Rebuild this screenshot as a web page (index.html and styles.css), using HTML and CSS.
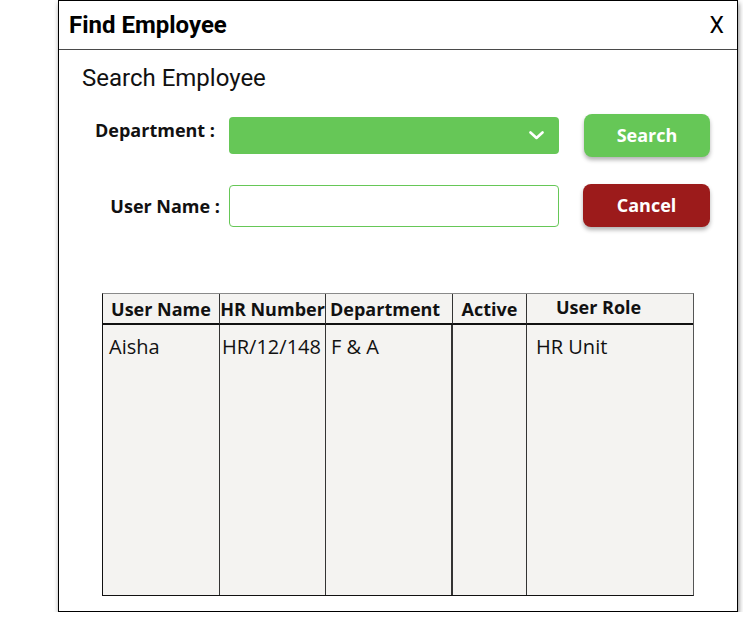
FILE: index.html
```html
<!DOCTYPE html>
<html lang="en">
<head>
<meta charset="utf-8">
<title>Find Employee</title>
<link rel="stylesheet" href="styles.css">
</head>
<body>
<div class="dialog">
  <div class="dialog-header">
    <h1 class="dialog-title">Find Employee</h1>
    <span class="dialog-close">X</span>
  </div>
  <h2 class="section-title">Search Employee</h2>
  <div class="form-row">
    <label class="form-label form-label-raised">Department :</label>
    <div class="select">
      <svg class="chevron" width="15" height="9" viewBox="0 0 15 9"><path d="M1.5 1.5 L7.5 7 L13.5 1.5" fill="none" stroke="#fff" stroke-width="2.6" stroke-linecap="round" stroke-linejoin="round"/></svg>
    </div>
    <button class="btn btn-search">Search</button>
  </div>
  <div class="form-row form-row-second">
    <label class="form-label form-label-wide">User Name :</label>
    <div class="text-input"></div>
    <button class="btn btn-cancel">Cancel</button>
  </div>
  <div class="table">
    <div class="th">User Name</div>
    <div class="th">HR Number</div>
    <div class="th th-dept">Department</div>
    <div class="th">Active</div>
    <div class="th th-role">User Role</div>
    <div class="td td-user">Aisha</div>
    <div class="td td-hr">HR/12/148</div>
    <div class="td td-dept">F &amp; A</div>
    <div class="td td-active"></div>
    <div class="td td-role">HR Unit</div>
  </div>
</div>
</body>
</html>
```
FILE: styles.css
```css
html, body {
  margin: 0;
  padding: 0;
  background: #fff;
}

.dialog {
  box-sizing: border-box;
  margin-left: 58px;
  width: 680px;
  height: 612px;
  border: 1px solid #000;
  background: #fff;
  box-shadow: 1px 3px 5px rgba(0, 0, 0, 0.45);
  display: flex;
  flex-direction: column;
}

.dialog-header {
  height: 48px;
  border-bottom: 1px solid #4a4a4a;
  display: flex;
  align-items: center;
  justify-content: space-between;
  padding: 0 13px 0 10px;
}

.dialog-title {
  margin: 0;
  font-family: Roboto, "Liberation Sans", sans-serif;
  font-weight: 700;
  font-size: 24px;
  color: #000;
}

.dialog-close {
  font-family: Roboto, "Liberation Sans", sans-serif;
  font-weight: 400;
  font-size: 23px;
  color: #000;
}

.section-title {
  margin: 15px 0 0 23px;
  font-family: Roboto, "Liberation Sans", sans-serif;
  font-weight: 400;
  font-size: 24px;
  line-height: 27px;
  color: #111;
}

.form-row {
  display: flex;
  align-items: center;
  margin-top: 22px;
  height: 43px;
}

.form-row-second {
  margin-top: 27px;
}

.form-label {
  box-sizing: border-box;
  width: 170px;
  padding-right: 14px;
  text-align: right;
  font-family: "Open Sans", "Liberation Sans", sans-serif;
  font-weight: 700;
  font-size: 18px;
  color: #111;
}

.form-label-raised {
  padding-bottom: 11px;
}

.form-label-wide {
  padding-right: 9px;
}

.select {
  box-sizing: border-box;
  width: 330px;
  height: 37px;
  background: #66c757;
  border-radius: 4px;
  display: flex;
  align-items: center;
  justify-content: flex-end;
  padding-right: 15px;
}

.chevron {
  display: block;
}

.text-input {
  box-sizing: border-box;
  width: 330px;
  height: 42px;
  border: 1px solid #66c757;
  border-radius: 4px;
  background: #fff;
}

.btn {
  box-sizing: border-box;
  margin-left: 25px;
  width: 126px;
  height: 43px;
  border: none;
  border-radius: 8px;
  color: #fff;
  font-family: "Open Sans", "Liberation Sans", sans-serif;
  font-weight: 700;
  font-size: 18px;
  box-shadow: 0 3px 4px rgba(0, 0, 0, 0.3);
  padding: 0 0 2px;
}

.btn-search {
  background: #66c757;
}

.btn-cancel {
  background: #9c1b1b;
  margin-left: 24px;
  width: 127px;
}

.table {
  box-sizing: border-box;
  margin: 66px 0 15px 43px;
  width: 592px;
  flex: 1;
  display: grid;
  grid-template-columns: 117px 106px 127px 74px 1fr;
  grid-template-rows: 31px 1fr;
  border: 1px solid #111;
  border-top-color: #8a8a8a;
  border-right-color: #555;
  background: #f4f3f1;
  font-family: "Open Sans", "Liberation Sans", sans-serif;
  color: #111;
}

.th {
  box-sizing: border-box;
  border-bottom: 2px solid #111;
  border-right: 1px solid #333;
  display: flex;
  align-items: center;
  justify-content: center;
  font-weight: 700;
  font-size: 18px;
  white-space: nowrap;
  overflow: visible;
}

.th-dept {
  justify-content: flex-start;
  padding-left: 4px;
}

.th-role {
  border-right: none;
  justify-content: flex-start;
  padding-left: 29px;
  padding-bottom: 4px;
}

.td {
  box-sizing: border-box;
  border-right: 1px solid #333;
  padding-top: 8px;
  font-size: 20px;
  font-weight: 500;
  white-space: nowrap;
}

.td-user { padding-left: 6px; }
.td-hr { padding-left: 2px; }
.td-dept { padding-left: 5px; border-right-width: 2px; }
.td-active { }
.td-role { padding-left: 9px; border-right: none; }
```
